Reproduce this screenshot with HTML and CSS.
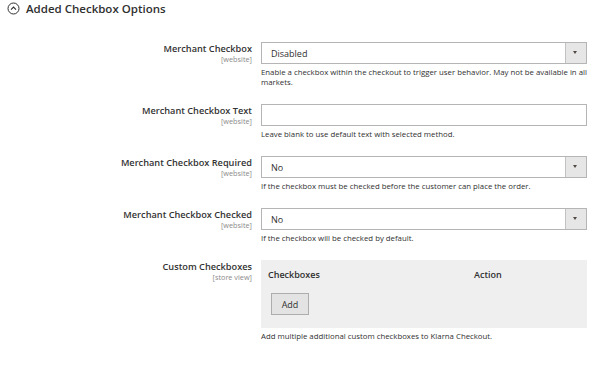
FILE: index.html
```html
<!DOCTYPE html>
<html lang="en">
<head>
  <meta charset="UTF-8">
  <title>Added Checkbox Options</title>
  <link rel="stylesheet" href="styles.css">
</head>
<body>
  <div class="section">
    <div class="section-title">
      <svg class="toggle" width="13" height="13" viewBox="0 0 13 13">
        <circle cx="6.5" cy="6.5" r="5.5" fill="none" stroke="#303030" stroke-width="1"/>
        <path d="M4 7.6 L6.5 5.1 L9 7.6" fill="none" stroke="#303030" stroke-width="1.1"/>
      </svg>
      <span>Added Checkbox Options</span>
    </div>

    <div class="field">
      <div class="label">
        <span class="name">Merchant Checkbox</span>
        <span class="scope">[website]</span>
      </div>
      <div class="control">
        <div class="select"><span>Disabled</span><span class="arrow"></span></div>
        <p class="note">Enable a checkbox within the checkout to trigger user behavior. May not be available in all markets.</p>
      </div>
    </div>

    <div class="field">
      <div class="label">
        <span class="name">Merchant Checkbox Text</span>
        <span class="scope">[website]</span>
      </div>
      <div class="control">
        <div class="input"></div>
        <p class="note">Leave blank to use default text with selected method.</p>
      </div>
    </div>

    <div class="field">
      <div class="label">
        <span class="name">Merchant Checkbox Required</span>
        <span class="scope">[website]</span>
      </div>
      <div class="control">
        <div class="select"><span>No</span><span class="arrow"></span></div>
        <p class="note">If the checkbox must be checked before the customer can place the order.</p>
      </div>
    </div>

    <div class="field">
      <div class="label">
        <span class="name">Merchant Checkbox Checked</span>
        <span class="scope">[website]</span>
      </div>
      <div class="control">
        <div class="select"><span>No</span><span class="arrow"></span></div>
        <p class="note">If the checkbox will be checked by default.</p>
      </div>
    </div>

    <div class="field">
      <div class="label">
        <span class="name">Custom Checkboxes</span>
        <span class="scope">[store view]</span>
      </div>
      <div class="control">
        <div class="grid-box">
          <div class="grid-head">
            <span class="col-main">Checkboxes</span>
            <span class="col-action">Action</span>
          </div>
          <button class="btn-add">Add</button>
        </div>
        <p class="note">Add multiple additional custom checkboxes to Klarna Checkout.</p>
      </div>
    </div>
  </div>
</body>
</html>
```

FILE: styles.css
```css
/* Base */
body {
  margin: 0;
  background: #fff;
  color: #303030;
  font-family: "Open Sans", sans-serif;
}

.section {
  padding: 0 0 10px;
}

/* Section title */
.section-title {
  display: flex;
  align-items: center;
  gap: 6px;
  padding: 1px 0 0 7px;
  height: 14px;
  font-size: 11.5px;
  font-weight: 600;
  margin-bottom: 27px;
}
.section-title .toggle {
  flex: none;
}

/* Field rows */
.field {
  display: grid;
  grid-template-columns: 252px 326px;
  column-gap: 9px;
  margin-bottom: 17px;
}
.label {
  display: flex;
  flex-direction: column;
  align-items: flex-end;
  text-align: right;
  padding-top: 1px;
}
.label .name {
  font-size: 9.2px;
  font-weight: 600;
  line-height: 12px;
  color: #333;
}
.label .scope {
  font-size: 7.3px;
  color: #8a8a8a;
  line-height: 9px;
}

/* Controls */
.select, .input {
  box-sizing: border-box;
  height: 22px;
  border: 1px solid #b5b5b5;
  background: #fff;
}
.select {
  display: flex;
  align-items: center;
  justify-content: space-between;
  font-size: 9px;
  padding-left: 9px;
}
.select .arrow {
  position: relative;
  width: 20px;
  height: 100%;
  background: #e6e6e6;
  border-left: 1px solid #c2c2c2;
}
.select .arrow::after {
  content: '';
  position: absolute;
  left: 7px;
  top: 8px;
  border-left: 2.5px solid transparent;
  border-right: 2.5px solid transparent;
  border-top: 3px solid #514943;
}
.note {
  margin: 3px 0 0;
  font-size: 7.8px;
  line-height: 10px;
  color: #303030;
}

/* Custom checkboxes grid */
.grid-box {
  background: #efefef;
  height: 68px;
  box-sizing: border-box;
  padding: 9px 10px 0 7px;
}
.grid-head {
  display: flex;
  font-size: 9px;
  font-weight: 600;
  line-height: 12px;
}
.grid-head .col-main {
  width: 206px;
}
.btn-add {
  margin: 12px 0 0 3px;
  width: 38px;
  height: 22px;
  background: #e3e3e3;
  border: 1px solid #adadad;
  font-family: "Open Sans", sans-serif;
  font-size: 9px;
  color: #303030;
  padding: 0;
}
```
